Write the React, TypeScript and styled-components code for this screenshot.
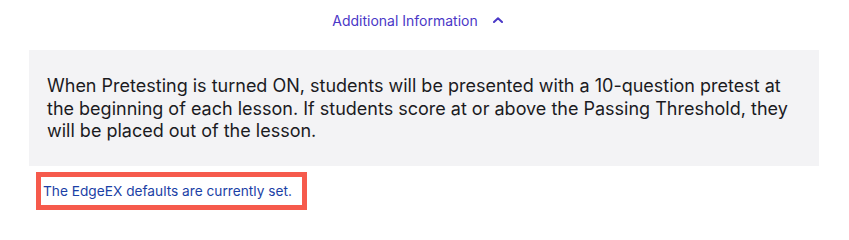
import styled, { createGlobalStyle } from 'styled-components';

const GlobalStyle = createGlobalStyle`
  html, body {
    margin: 0;
    padding: 0;
    background: #ffffff;
  }
  body {
    font-family: Inter, 'Noto Sans', sans-serif;
  }
`;

const Wrapper = styled.div`
  width: 849px;
  display: flex;
  flex-direction: column;
`;

const HeaderRow = styled.div`
  height: 40px;
  display: flex;
  align-items: center;
  justify-content: center;
  padding-right: 14px;
  box-sizing: border-box;
`;

const ToggleButton = styled.button`
  display: flex;
  align-items: center;
  gap: 15px;
  background: none;
  border: none;
  padding: 0;
  cursor: pointer;
  font-family: Inter, sans-serif;
  font-size: 14px;
  color: #4a38c7;
`;

const InfoPanel = styled.div`
  margin: 10px 30px 0 29px;
  background: #f3f3f5;
  padding: 25px 18px 23px;
  font-size: 18px;
  line-height: 22.5px;
  color: #1b1b1f;
`;

const StatusBox = styled.div`
  align-self: flex-start;
  margin: 6px 0 0 36px;
  border: 5px solid #f65a4c;
  height: 28px;
  width: 259px;
  display: flex;
  align-items: center;
  padding-left: 2px;
  box-sizing: content-box;
`;

const StatusText = styled.span`
  font-size: 13.7px;
  color: #1b3fa6;
`;

const ChevronUp = () => (
  <svg width="10" height="6" viewBox="0 0 10 6" fill="none">
    <path d="M1 5L5 1.3L9 5" stroke="#4a38c7" strokeWidth="2" strokeLinecap="round" strokeLinejoin="round" />
  </svg>
);

export default function App() {
  return (
    <>
      <GlobalStyle />
      <Wrapper>
        <HeaderRow>
          <ToggleButton>
            Additional Information
            <ChevronUp />
          </ToggleButton>
        </HeaderRow>
        <InfoPanel>
          When Pretesting is turned ON, students will be presented with a 10-question pretest at
          the beginning of each lesson. If students score at or above the Passing Threshold, they
          will be placed out of the lesson.
        </InfoPanel>
        <StatusBox>
          <StatusText>The EdgeEX defaults are currently set.</StatusText>
        </StatusBox>
      </Wrapper>
    </>
  );
}
